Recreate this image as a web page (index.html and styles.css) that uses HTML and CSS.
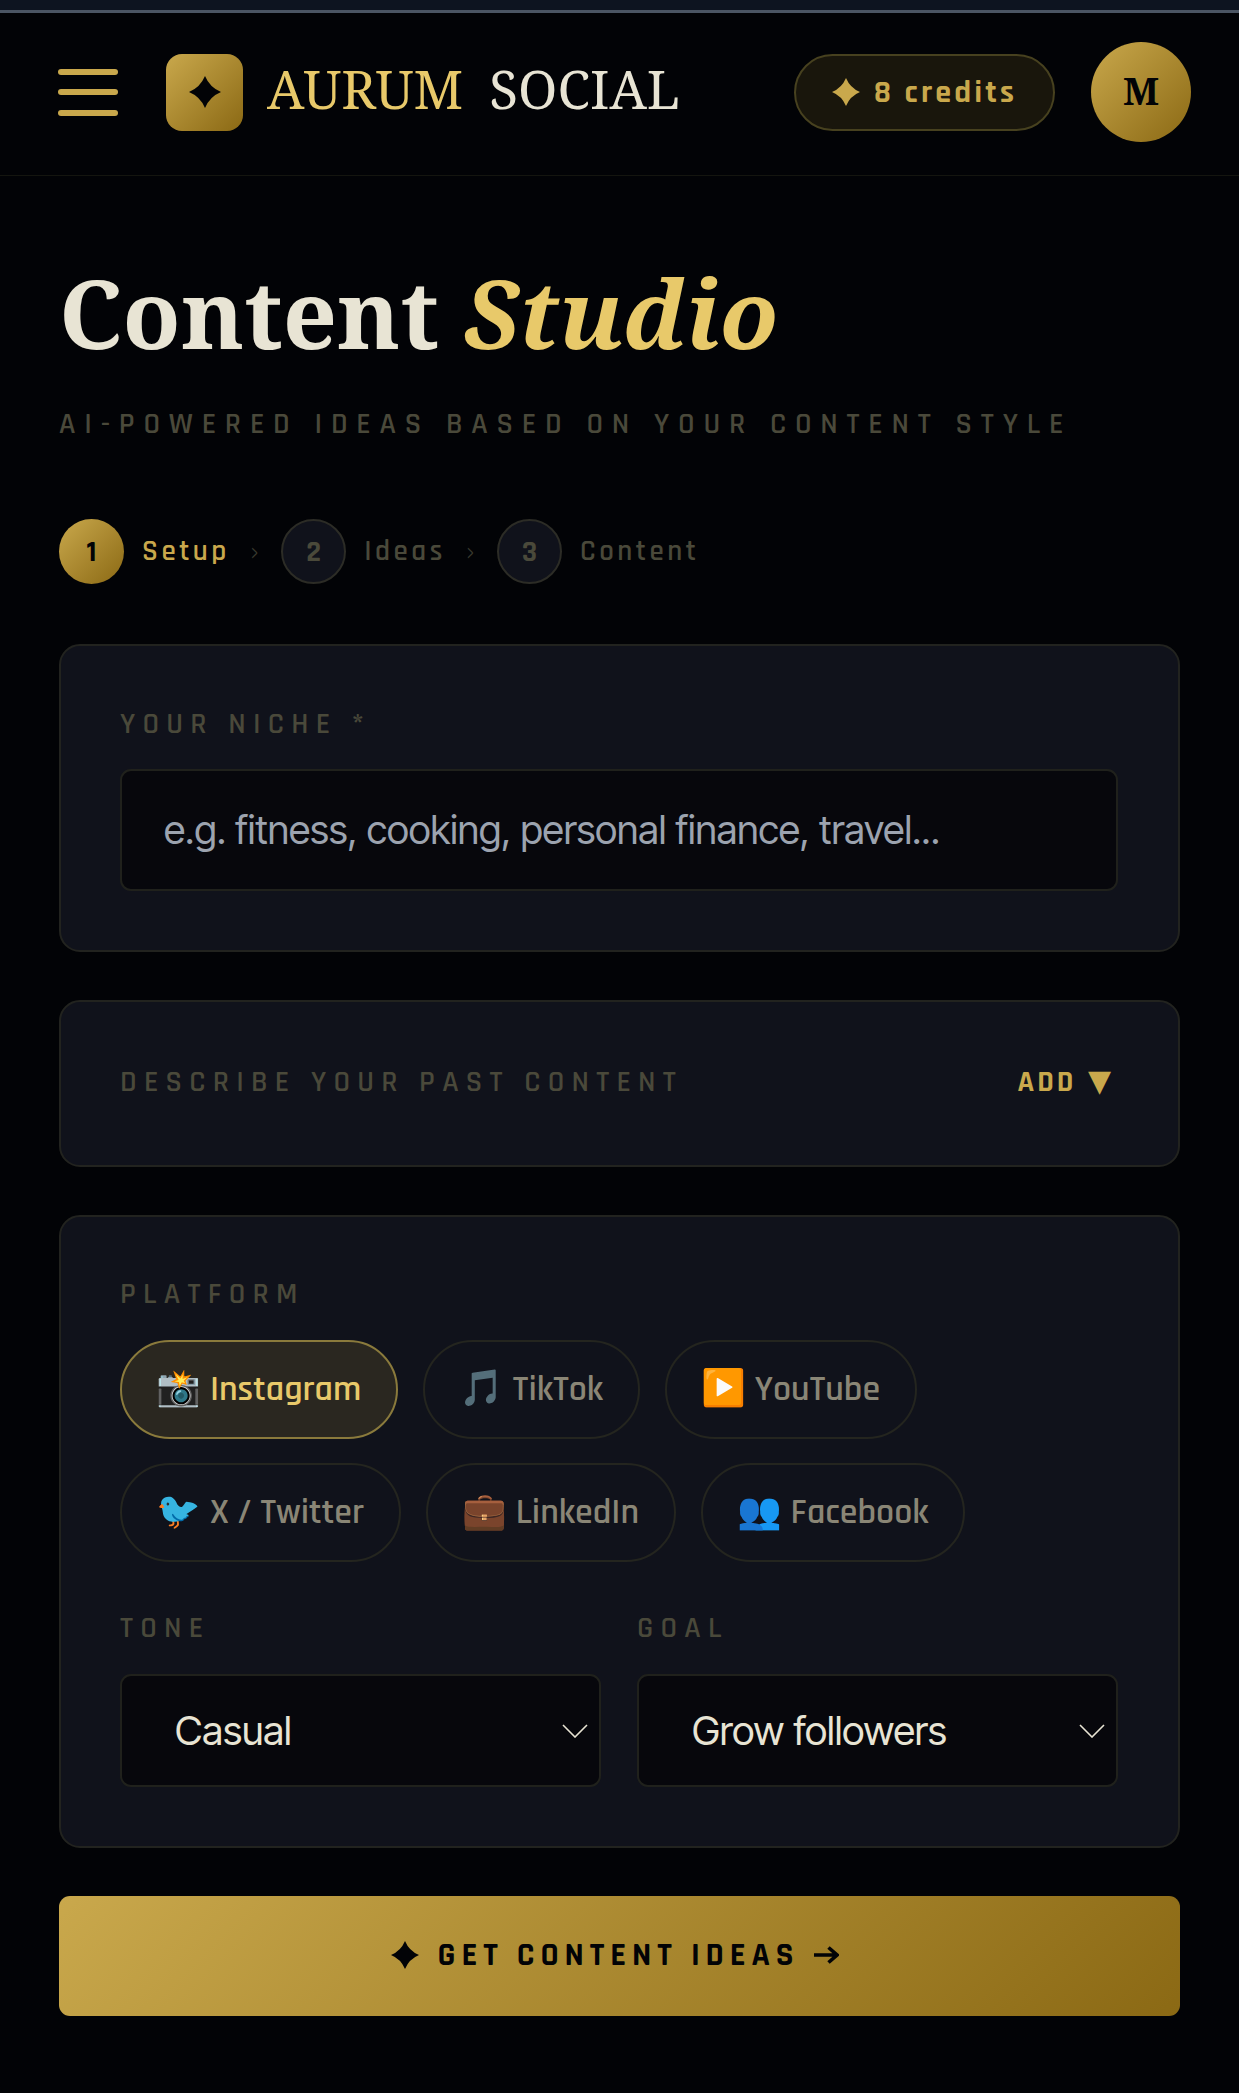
FILE: index.html
```html
<!DOCTYPE html>
<html lang="en">
<head>
<meta charset="utf-8">
<title>Aurum Social</title>
<link rel="stylesheet" href="styles.css">
</head>
<body>
<div class="topstrip"></div>
<header class="header">
  <button class="burger" aria-label="Menu"><span></span><span></span><span></span></button>
  <div class="logo"><svg viewBox="0 0 24 24" class="star star-logo"><path d="M12 0Q15.5 8.5 24 12Q15.5 15.5 12 24Q8.5 15.5 0 12Q8.5 8.5 12 0Z"/></svg></div>
  <div class="brand"><span class="brand-gold">AURUM</span><span class="brand-cream">SOCIAL</span></div>
  <div class="credits"><svg viewBox="0 0 24 24" class="star star-credit"><path d="M12 0Q15.5 8.5 24 12Q15.5 15.5 12 24Q8.5 15.5 0 12Q8.5 8.5 12 0Z"/></svg><span>8 credits</span></div>
  <div class="avatar">M</div>
</header>
<main class="main">
  <h1 class="title">Content <em>Studio</em></h1>
  <p class="subtitle">AI-POWERED IDEAS BASED ON YOUR CONTENT STYLE</p>
  <ol class="steps">
    <li class="step step-active"><span class="step-num">1</span><span class="step-label">Setup</span><span class="step-sep">›</span></li>
    <li class="step"><span class="step-num">2</span><span class="step-label">Ideas</span><span class="step-sep">›</span></li>
    <li class="step"><span class="step-num">3</span><span class="step-label">Content</span></li>
  </ol>
  <section class="card card-niche">
    <label class="label label-niche" for="niche">YOUR NICHE *</label>
    <input id="niche" class="input" placeholder="e.g. fitness, cooking, personal finance, travel...">
  </section>
  <section class="card card-past">
    <span class="label">DESCRIBE YOUR PAST CONTENT</span>
    <span class="add">ADD ▼</span>
  </section>
  <section class="card card-platform">
    <div class="label">PLATFORM</div>
    <div class="pills">
      <button class="pill pill-on">📸 Instagram</button>
      <button class="pill">🎵 TikTok</button>
      <button class="pill">▶️ YouTube</button>
      <button class="pill">🐦 X / Twitter</button>
      <button class="pill">💼 LinkedIn</button>
      <button class="pill">👥 Facebook</button>
    </div>
    <div class="selects">
      <div class="field">
        <div class="label">TONE</div>
        <div class="select"><span>Casual</span><svg viewBox="0 0 26 14" class="chev"><path d="M1 1L13 13L25 1"/></svg></div>
      </div>
      <div class="field">
        <div class="label">GOAL</div>
        <div class="select"><span>Grow followers</span><svg viewBox="0 0 26 14" class="chev"><path d="M1 1L13 13L25 1"/></svg></div>
      </div>
    </div>
  </section>
  <button class="cta"><svg viewBox="0 0 24 24" class="star star-cta"><path d="M12 0Q15.5 8.5 24 12Q15.5 15.5 12 24Q8.5 15.5 0 12Q8.5 8.5 12 0Z"/></svg><span>GET CONTENT IDEAS</span><svg viewBox="0 0 26 18" class="cta-arrow"><path d="M1 9H24M15.5 1.5L24 9L15.5 16.5"/></svg></button>
</main>
</body>
</html>
```
FILE: styles.css
```css
* { box-sizing: border-box; }
html, body { margin: 0; padding: 0; }
body {
  background: #020306;
  color: #e8e4d4;
  height: 2093px;
  overflow: hidden;
  font-family: "Rajdhani", "DejaVu Sans", sans-serif;
}
.star { fill: currentColor; flex: none; }
.star-logo { width: 32px; height: 32px; }
.star-credit { width: 28px; height: 28px; margin-right: 14px; }
.star-cta { width: 28px; height: 28px; margin-right: 19px; }
.topstrip { height: 13px; background: #0d1420; border-bottom: 3px solid #4b5563; }
.header {
  height: 163px;
  padding: 0 48px 4px 58px;
  display: flex;
  align-items: center;
  border-bottom: 1px solid #14150f;
}
.burger {
  width: 60px; height: 47px; padding: 0; margin-right: 48px;
  background: none; border: 0;
  display: flex; flex-direction: column; justify-content: space-between;
}
.burger span { display: block; height: 6px; border-radius: 3px; background: #c9a84c; }
.logo {
  width: 77px; height: 77px; border-radius: 16px;
  background: linear-gradient(135deg, #c9a84c, #8b6914);
  display: flex; align-items: center; justify-content: center;
  margin-right: 24px;
  color: #020306;
}
.brand {
  font-family: "Noto Serif", "Liberation Serif", serif;
  font-size: 53px; line-height: 1;
  display: flex; gap: 26px;
  padding-bottom: 8px;
}
.brand-gold { color: #e8c96a; }
.brand-cream { color: #e8e4d4; }
.credits {
  margin-left: auto;
  width: 261px; height: 77px;
  border: 2px solid #47411f;
  border-radius: 39px;
  background: #19160c;
  color: #c9a84c;
  display: flex; align-items: center; justify-content: center;
  font-size: 32px; font-weight: 700; letter-spacing: 3.2px;
}
.avatar {
  width: 100px; height: 100px; margin-left: 36px;
  border-radius: 50%;
  background: linear-gradient(135deg, #c9a84c, #8b6914);
  color: #020306;
  font-family: "Noto Serif", serif; font-weight: 700; font-size: 38px;
  display: flex; align-items: center; justify-content: center;
  padding-bottom: 5px;
}
.main { padding: 0 59px; }
.title {
  margin: 79px 0 0;
  font-family: "Noto Serif", "DejaVu Serif", serif;
  font-weight: 700; font-size: 95px; line-height: 115px;
  color: #e8e4d4;
}
.title em { color: #e8c96a; font-style: italic; }
.subtitle {
  margin: 39px 0 0;
  font-size: 30px; font-weight: 600; line-height: 30px;
  letter-spacing: 8.8px;
  color: #4a493a;
  white-space: nowrap;
}
.steps { list-style: none; margin: 80px 0 0; padding: 0; display: flex; }
.step { display: flex; align-items: center; }
.step-num {
  width: 65px; height: 65px; border-radius: 50%;
  border: 2px solid #2c2c26; background: #10121b;
  color: #4a493a;
  display: flex; align-items: center; justify-content: center;
  font-size: 30px; font-weight: 700;
}
.step-label { margin-left: 18px; font-size: 29px; font-weight: 600; letter-spacing: 3.5px; color: #4a493a; }
.step-sep { margin: 0 22px 0 20px; color: #3a3a2e; font-size: 32px; }
.step-active .step-num { border: 0; background: linear-gradient(135deg, #c9a84c, #8b6914); color: #020306; }
.step-active .step-label { color: #c9a84c; }
.card {
  background: #10121b;
  border: 2px solid #22231f;
  border-radius: 21px;
  padding: 0 60px 0 59px;
}
.label {
  display: block;
  font-size: 30px; font-weight: 600; line-height: 28px;
  letter-spacing: 7.25px;
  color: #4a493a;
}
.card-niche { margin-top: 60px; height: 308px; padding-top: 64px; }
.input {
  display: block; width: 100%; height: 122px; margin-top: 31px;
  padding: 0 42px;
  background: #07070c;
  border: 2px solid #20211c;
  border-radius: 11px;
  font-family: "Inter Tight", "Inter", sans-serif; font-size: 39.5px;
  color: #e8e4d4;
  outline: none;
}
.input::placeholder { color: #9ca3af; opacity: 1; }
.card-past {
  margin-top: 48px; height: 167px;
  display: flex; align-items: center; justify-content: space-between;
  padding-right: 64px; padding-bottom: 3px;
}
.add {
  color: #c9a84c; font-size: 30px; font-weight: 700; letter-spacing: 3px;
  word-spacing: 2px;
  white-space: pre;
}
.card-platform { margin-top: 48px; height: 633px; padding-top: 63px; }
.pills { display: flex; flex-wrap: wrap; gap: 24px 25px; margin-top: 32px; }
.pill {
  height: 99px; padding: 0 34.7px;
  border: 2px solid #24251f; border-radius: 50px;
  background: transparent;
  color: #8a8676;
  font-family: "Rajdhani", "Noto Color Emoji", sans-serif; font-size: 35.9px; font-weight: 600;
  white-space: pre;
}
.pill-on { background: #2a2720; border-color: #8a7a3c; color: #e8c96a; }
.selects { display: grid; grid-template-columns: 1fr 1fr; gap: 36px; margin-top: 52px; }
.select {
  height: 113px; margin-top: 32px; padding: 0 11px 0 53px;
  background: #07070c;
  border: 2px solid #20211c; border-radius: 11px;
  display: flex; align-items: center; justify-content: space-between;
  font-family: "Inter Tight", "Inter", sans-serif; font-size: 40px;
  color: #e8e4d4;
}
.chev { width: 26px; height: 14px; fill: none; stroke: #e8e4d4; stroke-width: 1.6; }
.cta {
  display: flex; align-items: center; justify-content: center;
  margin-top: 48px; width: 100%; height: 120px;
  border: 0; border-radius: 11px;
  background: linear-gradient(135deg, #c9a84c, #8b6914);
  color: #020306;
  font-family: inherit; font-size: 33px; font-weight: 700; letter-spacing: 5.9px;
  padding: 0 9px 3px 0;
}
.cta-arrow { width: 26px; height: 18px; margin-left: 14px; fill: none; stroke: currentColor; stroke-width: 3.6; }
```
